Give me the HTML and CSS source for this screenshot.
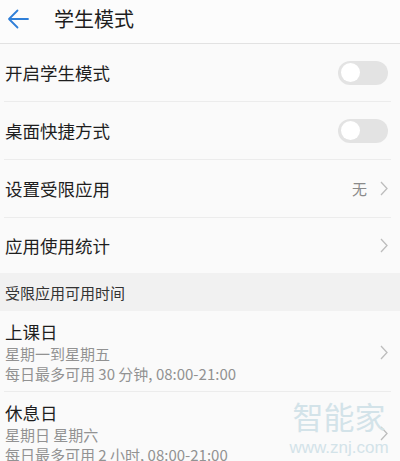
FILE: index.html
```html
<!DOCTYPE html>
<html lang="zh">
<head>
<meta charset="utf-8">
<link rel="stylesheet" href="styles.css">
</head>
<body>
<div class="page">
  <header class="topbar">
    <svg class="back" width="22" height="20" viewBox="0 0 22 20"><path d="M21 10H2M10.5 1.5L2 10l8.5 8.5" fill="none" stroke="#2f7fd8" stroke-width="1.8" stroke-linecap="round" stroke-linejoin="round"/></svg>
    <h1 class="title">学生模式</h1>
  </header>
  <div class="list">
    <div class="row">
      <span class="label">开启学生模式</span>
      <span class="switch"><span class="knob"></span></span>
    </div>
    <div class="row">
      <span class="label">桌面快捷方式</span>
      <span class="switch"><span class="knob"></span></span>
    </div>
    <div class="row">
      <span class="label">设置受限应用</span>
      <span class="right"><span class="value">无</span><svg class="chev" width="8" height="15" viewBox="0 0 8 15"><path d="M1 1l6 6.5L1 14" fill="none" stroke="#bdbdbd" stroke-width="1.3"/></svg></span>
    </div>
    <div class="row last">
      <span class="label">应用使用统计</span>
      <svg class="chev" width="8" height="15" viewBox="0 0 8 15"><path d="M1 1l6 6.5L1 14" fill="none" stroke="#bdbdbd" stroke-width="1.3"/></svg>
    </div>
  </div>
  <div class="section">受限应用可用时间</div>
  <div class="list">
    <div class="row tall">
      <div class="info">
        <div class="label">上课日</div>
        <div class="sub">星期一到星期五</div>
        <div class="sub">每日最多可用 30 分钟, 08:00-21:00</div>
      </div>
      <svg class="chev" width="8" height="15" viewBox="0 0 8 15"><path d="M1 1l6 6.5L1 14" fill="none" stroke="#bdbdbd" stroke-width="1.3"/></svg>
    </div>
    <div class="row tall last">
      <div class="info">
        <div class="label">休息日</div>
        <div class="sub">星期日 星期六</div>
        <div class="sub">每日最多可用 2 小时, 08:00-21:00</div>
      </div>
      <svg class="chev" width="8" height="15" viewBox="0 0 8 15"><path d="M1 1l6 6.5L1 14" fill="none" stroke="#bdbdbd" stroke-width="1.3"/></svg>
    </div>
  </div>
  <div class="watermark">
    <div class="wm-cn">智能家</div>
    <div class="wm-url">www.znj.com</div>
  </div>
</div>
</body>
</html>
```
FILE: styles.css
```css
html, body {
  margin: 0;
  padding: 0;
}
body {
  background: #fafafa;
  font-family: "Noto Sans CJK SC", "Noto Sans", sans-serif;
  color: #1e1e1e;
}
.page {
  position: relative;
  width: 400px;
  height: 461px;
  overflow: hidden;
}
.topbar {
  height: 43px;
  display: flex;
  align-items: center;
  gap: 25px;
  padding-left: 7px;
  background: #fcfcfc;
  border-bottom: 1px solid #e2e2e2;
  box-sizing: content-box;
}
.back {
  display: block;
  margin-top: -6px;
}
.title {
  margin: -6px 0 0;
  font-size: 20px;
  font-weight: 400;
  line-height: 28px;
  color: #1e1e1e;
}
.list {
  padding: 0 9px 0 4px;
}
.row {
  height: 57px;
  display: flex;
  align-items: center;
  justify-content: space-between;
  border-bottom: 1px solid #ececec;
  padding: 0 3px 0 1px;
}
.row.last {
  border-bottom: none;
  height: 55px;
}
.label {
  font-size: 17.5px;
  line-height: 24px;
  color: #1e1e1e;
}
.switch {
  width: 50px;
  height: 24px;
  border-radius: 12px;
  background: #e3e3e3;
  display: flex;
  align-items: center;
  padding-left: 3px;
  box-sizing: border-box;
}
.knob {
  width: 19px;
  height: 19px;
  border-radius: 50%;
  background: #ffffff;
}
.right {
  display: flex;
  align-items: center;
  gap: 13px;
}
.value {
  font-size: 15px;
  color: #8a8a8a;
}
.chev {
  display: block;
}
.section {
  height: 38px;
  background: #f1f1f1;
  display: flex;
  align-items: center;
  padding-left: 5px;
  font-size: 15px;
  color: #333;
}
.row.tall {
  height: auto;
  padding-top: 9px;
  padding-bottom: 7px;
}
.row.tall.last {
  height: auto;
}
.sub {
  font-size: 15px;
  line-height: 20px;
  color: #929292;
}
.watermark {
  position: absolute;
  left: 287px;
  top: 399px;
  width: 104px;
  text-align: center;
  color: #d3e3e9;
  pointer-events: none;
}
.wm-cn {
  font-size: 31px;
  line-height: 34px;
}
.wm-url {
  font-family: "Liberation Sans", sans-serif;
  font-size: 17px;
  line-height: 20px;
  margin-top: 5px;
}
```
